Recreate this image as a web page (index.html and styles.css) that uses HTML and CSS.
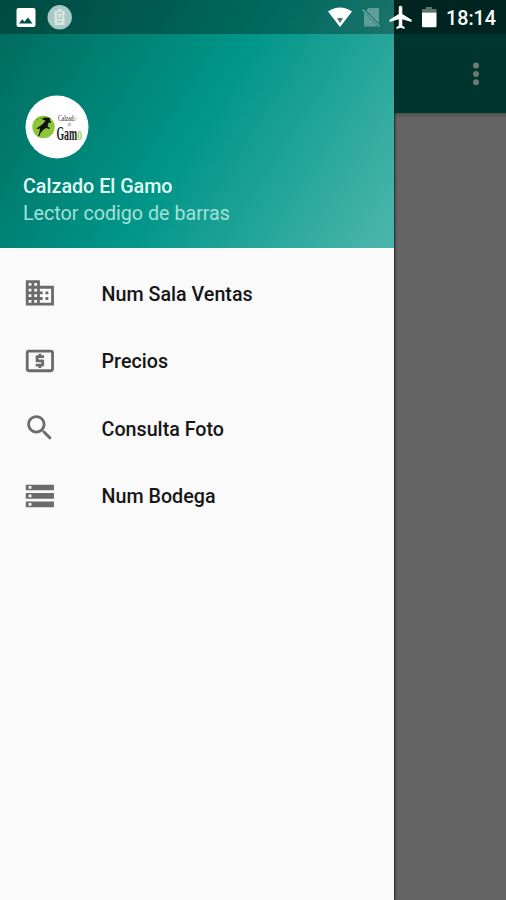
FILE: index.html
```html
<!DOCTYPE html>
<html lang="es">
<head>
<meta charset="utf-8">
<title>Calzado El Gamo</title>
<link rel="stylesheet" href="styles.css">
</head>
<body>
<div class="screen">
  <aside class="drawer">
    <header class="drawer-header">
      <svg class="avatar" viewBox="0 0 64 64">
        <circle cx="32" cy="32" r="31.5" fill="#fff"/>
        <circle cx="18.500" cy="32" r="11.200" fill="#8cc63a"/>
        <path d="M11.500 24.800Q19 21 25.500 23.200L24.500 25l1.500 1.500-.5 1.500-2-.5-1 4 2.500 1.500-.5 1-3.500-1-3 2-2.500 3-1.500 3.500-1-.4 1.500-4 .5-3.500-3 .5-.5-.8 4-2.500 3-2.500 2-3-3.500-.3 2-1.700q-4-.5-7 1z" fill="#111"/>
        <g class="logo-text">
          <text transform="translate(33 26) scale(.62 1)" font-size="9">Calzad<tspan fill="#8cc63a">o</tspan></text>
          <text transform="translate(43 30.500) scale(.8 1)" font-size="4">El</text>
          <text transform="translate(31.500 45) scale(.53 1)" font-size="18.500" font-weight="bold">Gam<tspan fill="#a4d65e">o</tspan></text>
        </g>
      </svg>
      <div class="name">Calzado El Gamo</div>
      <div class="subtitle">Lector codigo de barras</div>
    </header>
    <nav class="menu">
      <a class="item"><svg class="icon" viewBox="0 0 24 24"><path d="M12 7V3H2v18h20V7H12zM6 19H4v-2h2v2zm0-4H4v-2h2v2zm0-4H4V9h2v2zm0-4H4V5h2v2zm4 12H8v-2h2v2zm0-4H8v-2h2v2zm0-4H8V9h2v2zm0-4H8V5h2v2zm10 12h-8v-2h2v-2h-2v-2h2v-2h-2V9h8v10zm-2-8h-2v2h2v-2zm0 4h-2v2h2v-2z"/></svg><span class="label">Num Sala Ventas</span></a>
      <a class="item"><svg class="icon" viewBox="0 0 24 24"><path d="M11 17h2v-1h1c.55 0 1-.45 1-1v-3c0-.55-.45-1-1-1h-3v-1h4V8h-2V7h-2v1h-1c-.55 0-1 .45-1 1v3c0 .55.45 1 1 1h3v1H9v2h2v1zm9-13H4c-1.110 0-1.990.89-1.990 2L2 18c0 1.110.89 2 2 2h16c1.110 0 2-.89 2-2V6c0-1.110-.89-2-2-2zm0 14H4V6h16v12z"/></svg><span class="label">Precios</span></a>
      <a class="item"><svg class="icon" viewBox="0 0 24 24"><path d="M15.500 14h-.79l-.28-.27C15.410 12.590 16 11.110 16 9.500 16 5.910 13.090 3 9.500 3S3 5.910 3 9.500 5.910 16 9.500 16c1.610 0 3.090-.59 4.230-1.570l.27.28v.79l5 4.990L20.490 19l-4.990-5zm-6 0C7.010 14 5 11.990 5 9.500S7.010 5 9.500 5 14 7.010 14 9.500 11.990 14 9.500 14z"/></svg><span class="label">Consulta Foto</span></a>
      <a class="item"><svg class="icon" viewBox="0 0 24 24"><path d="M2 20h20v-4H2v4zm2-3h2v2H4v-2zM2 4v4h20V4H2zm4 3H4V5h2v2zm-4 7h20v-4H2v4zm2-3h2v2H4v-2z"/></svg><span class="label">Num Bodega</span></a>
    </nav>
  </aside>
  <main class="page">
    <div class="toolbar">
      <svg class="more" viewBox="0 0 8 24"><circle cx="4" cy="3.500" r="3"/><circle cx="4" cy="12" r="3"/><circle cx="4" cy="20.300" r="3"/></svg>
    </div>
    <div class="content"></div>
  </main>
  <div class="status">
    <svg class="status-icons" viewBox="0 0 506 34">
      <path fill="#fff" fill-rule="evenodd" d="M18.500 8h15q2 0 2 2v15q0 2-2 2h-15q-2 0-2-2V10q0-2 2-2zM19 23.500h13.500l-4.500-6-3.500 4.200-2.300-2.400z"/>
      <circle cx="59.700" cy="17.300" r="12.200" fill="#a8c9c4"/>
      <path d="M57.500 9h4v2h3v14h-10V11h3z" fill="#d5e5e2"/>
      <path d="M57.500 12.500h4v6h-4zM57 21.500h5" fill="none" stroke="#a4c1bd"/>
      <path d="M328 11.500Q340 3.500 352 11.500L340 27z" fill="#fff"/>
      <path d="M337 18.500q3-1.500 6 0l-3 4.500z" fill="#60736f"/>
      <path d="M368.500 8H379v15.500L366 10.500zM364 12.500 377.500 26.500H364z" fill="#fff" opacity=".32"/>
      <path d="m362.500 9.500 17 17" stroke="#6eaaa1" stroke-width="1.500"/>
      <path transform="translate(387.200 3.500) scale(1.160)" d="M21 16v-2l-8-5V3.500c0-.83-.67-1.500-1.500-1.500S10 2.670 10 3.500V9l-8 5v2l8-2.500V19l-2 1.500V22l3.500-1 3.500 1v-1.500L13 19v-5.500l8 2.500z" fill="#fff"/>
      <path d="M422 12.500V9h4V7h6v2h4.500v3.500z" fill="#61716d"/>
      <path d="M422 12.500h14.500V26q0 1.300-1.300 1.300h-12q-1.200 0-1.200-1.300z" fill="#fff"/>
    </svg>
    <span class="clock">18:14</span>
  </div>
</div>
</body>
</html>
```
FILE: styles.css
```css
* { box-sizing: border-box; }
body { margin: 0; font-family: Roboto, "Liberation Sans", sans-serif; }
.screen {
  position: relative;
  display: flex;
  width: 506px;
  height: 900px;
  overflow: hidden;
  background: #646464;
}
.drawer { width: 394px; flex: none; background: #fafafa; box-shadow: 0 0 2px 1px #222; z-index: 1; }
.drawer-header {
  height: 248px;
  padding: 95px 0 0 23px;
  background: linear-gradient(122.200deg, #00695c, #009688 50%, #4db6ac);
}
.avatar { display: block; width: 64px; height: 64px; margin-left: 1.500px; }
.logo-text { font-family: "Liberation Serif", serif; fill: #222; }
.name, .subtitle { font-size: 19.700px; line-height: 26px; white-space: nowrap; }
.name { margin-top: 15px; color: #e2faf6; font-weight: 500; }
.subtitle { margin-top: 1px; color: #a5e0d8; }
.menu { padding-top: 11.500px; }
.item {
  display: flex;
  align-items: center;
  height: 67.500px;
  padding-left: 22.800px;
  color: #161616;
  font-size: 19.700px;
  font-weight: 500;
}
.label { padding-top: 2px; }
.icon { width: 33.750px; height: 33.750px; margin-right: 45px; fill: #6b6b6b; }
.page { flex: 1; }
.toolbar {
  display: flex;
  justify-content: flex-end;
  height: 113px;
  padding: 62px 26px 0 0;
  background: #00352e;
}
.more { width: 8px; height: 24px; fill: #6d7a77; }
.content { height: 787px; background: linear-gradient(#505050, #646464 5px); }
.status {
  position: absolute;
  inset: 0 0 auto;
  z-index: 2;
  height: 34px;
  background: rgba(0, 0, 0, .3);
}
.status-icons { display: block; width: 506px; height: 34px; }
.clock {
  position: absolute;
  top: 7px;
  left: 446px;
  color: #fff;
  font-size: 19.700px;
  font-weight: 500;
  line-height: 24px;
}
```
